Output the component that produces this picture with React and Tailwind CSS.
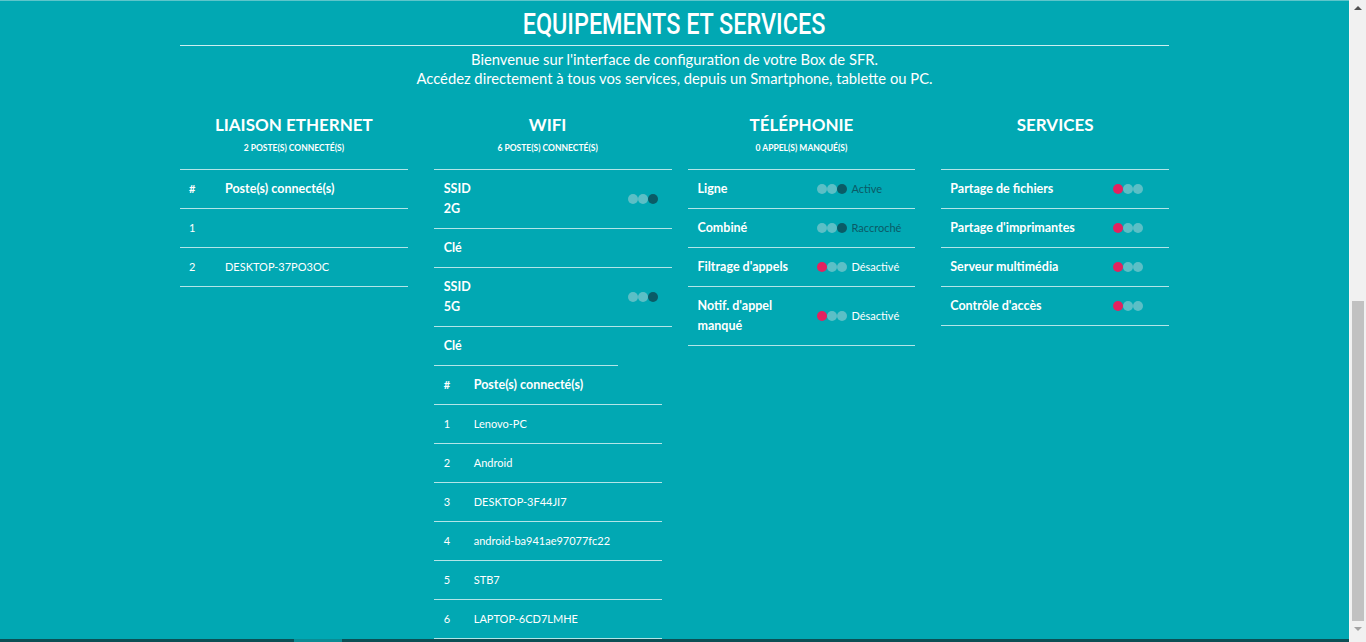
import React from "react"

const font = { fontFamily: "Lato, 'Open Sans', sans-serif" }

function Dots({ state }) {
  // state: "on" -> light light dark ; "off" -> red light light
  const light = "bg-[#5cbfc6]"
  const colors =
    state === "on"
      ? [light, light, "bg-[#0a5b66]"]
      : ["bg-[#e3225f]", light, light]
  return (
    <div className="flex items-center">
      {colors.map((c, i) => (
        <span key={i} className={`h-[10px] w-[10px] rounded-full ${c}`} />
      ))}
    </div>
  )
}

function ColHeader({ title, sub }) {
  return (
    <div className="h-[54px] text-center">
      <div className="text-[17px] font-bold leading-[20px] text-white">{title}</div>
      <div className="mt-[8px] text-[8.5px] font-bold uppercase leading-[10px] text-white">{sub}</div>
    </div>
  )
}

function DeviceTable({ rows, nameCol = "pl-[36px]", numCol = "pl-[9px]", top = true }) {
  return (
    <div className={top ? "border-t border-white/70" : ""}>
      <div className="flex h-[39px] items-center border-b border-white/70 text-[12.5px] font-bold text-white">
        <span className={`${numCol} w-0 text-[11px]`}>#</span>
        <span className={nameCol}>Poste(s) connecté(s)</span>
      </div>
      {rows.map((r, i) => (
        <div key={i} className="flex h-[39px] items-center border-b border-white/70 text-[11px] text-white">
          <span className={`${numCol} w-0`}>{i + 1}</span>
          <span className={nameCol}>{r}</span>
        </div>
      ))}
    </div>
  )
}

function Ethernet() {
  return (
    <div>
      <ColHeader title="LIAISON ETHERNET" sub="2 poste(s) connecté(s)" />
      <DeviceTable rows={["", "DESKTOP-37PO3OC"]} />
    </div>
  )
}

function Wifi() {
  const ssid = (band) => (
    <div className="flex h-[59px] items-center justify-between border-b border-white/70 pl-[10px] pr-[14px] text-[12.5px] font-bold leading-[20px] text-white">
      <div>
        <div>SSID</div>
        <div>{band}</div>
      </div>
      <Dots state="on" />
    </div>
  )
  return (
    <div>
      <ColHeader title="WIFI" sub="6 poste(s) connecté(s)" />
      <div className="mr-[-10px] border-t border-white/70">
        {ssid("2G")}
        <div className="flex h-[39px] items-center border-b border-white/70 pl-[10px] text-[12.5px] font-bold text-white">Clé</div>
        {ssid("5G")}
      </div>
      <div className="flex h-[39px] w-[184px] items-center border-b border-white/70 pl-[10px] text-[12.5px] font-bold text-white">Clé</div>
      <DeviceTable
        rows={["Lenovo-PC", "Android", "DESKTOP-3F44JI7", "android-ba941ae97077fc22", "STB7", "LAPTOP-6CD7LMHE"]}
        numCol="pl-[10px]"
        nameCol="pl-[30px]"
        top={false}
      />
    </div>
  )
}

function Telephonie() {
  const rows = [
    { label: "Ligne", state: "on", status: "Active" },
    { label: "Combiné", state: "on", status: "Raccroché" },
    { label: "Filtrage d'appels", state: "off", status: "Désactivé" },
    { label: "Notif. d'appel manqué", state: "off", status: "Désactivé", tall: true },
  ]
  return (
    <div>
      <ColHeader title="TÉLÉPHONIE" sub="0 appel(s) manqué(s)" />
      <div className="border-t border-white/70">
        {rows.map((r) => (
          <div
            key={r.label}
            className={`flex items-center border-b border-white/70 pl-[10px] text-[11px] text-white ${r.tall ? "h-[59px]" : "h-[39px]"}`}
          >
            <div className="w-[119px] text-[12.5px] font-bold leading-[20px]">
              {r.tall ? (
                <>
                  <div>Notif. d'appel</div>
                  <div>manqué</div>
                </>
              ) : (
                r.label
              )}
            </div>
            <Dots state={r.state} />
            <span className={`ml-[5px] ${r.state === "on" ? "text-[#0b5a66]" : "text-white"}`}>{r.status}</span>
          </div>
        ))}
      </div>
    </div>
  )
}

function Services() {
  const rows = ["Partage de fichiers", "Partage d'imprimantes", "Serveur multimédia", "Contrôle d'accès"]
  return (
    <div>
      <ColHeader title="SERVICES" sub="" />
      <div className="border-t border-white/70">
        {rows.map((r) => (
          <div key={r} className="flex h-[39px] items-center border-b border-white/70 pl-[9px] text-[12.5px] font-bold text-white">
            <div className="w-[163px]">{r}</div>
            <Dots state="off" />
          </div>
        ))}
      </div>
    </div>
  )
}

export default function App() {
  return (
    <div className="flex h-[642px] w-[1366px] overflow-hidden bg-[#01a8b3]" style={font}>
      <div className="flex min-w-0 flex-1 flex-col border-t border-[#5ec5cb]">
        <div className="flex-1 overflow-hidden">
          <div className="ml-[180px] w-[989px]">
            <div className="h-[44px] pt-[5px] text-center">
              <span
                className="inline-block scale-x-[0.78] text-[30px] font-medium leading-[36px] text-white"
                style={{ fontFamily: "Roboto, sans-serif" }}
              >
                EQUIPEMENTS ET SERVICES
              </span>
            </div>
            <div className="border-t border-white/80" />
            <div className="mt-[4px] text-center text-[14.75px] leading-[19px] text-white">
              <p>Bienvenue sur l'interface de configuration de votre Box de SFR.</p>
              <p>Accédez directement à tous vos services, depuis un Smartphone, tablette ou PC.</p>
            </div>
            <div className="mt-[27px] grid grid-cols-4 gap-x-[26px]">
              <Ethernet />
              <Wifi />
              <Telephonie />
              <Services />
            </div>
          </div>
        </div>
        <div className="flex h-[3px] bg-[#0b4f55]">
          <div className="ml-[294px] w-[48px] bg-[#0a8c94]" />
        </div>
      </div>
      <div className="flex w-[17px] flex-col items-center border-l border-[#f7f7f7] bg-[#f1f1f1]">
        <div className="mt-[6px] h-0 w-0 border-x-[4px] border-b-[4px] border-x-transparent border-b-[#505050]" />
        <div className="mt-[291px] h-[320px] w-[12px] bg-[#c1c1c1]" />
        <div className="mt-[6px] h-0 w-0 border-x-[4px] border-t-[4px] border-x-transparent border-t-[#a3a3a3]" />
      </div>
    </div>
  )
}
